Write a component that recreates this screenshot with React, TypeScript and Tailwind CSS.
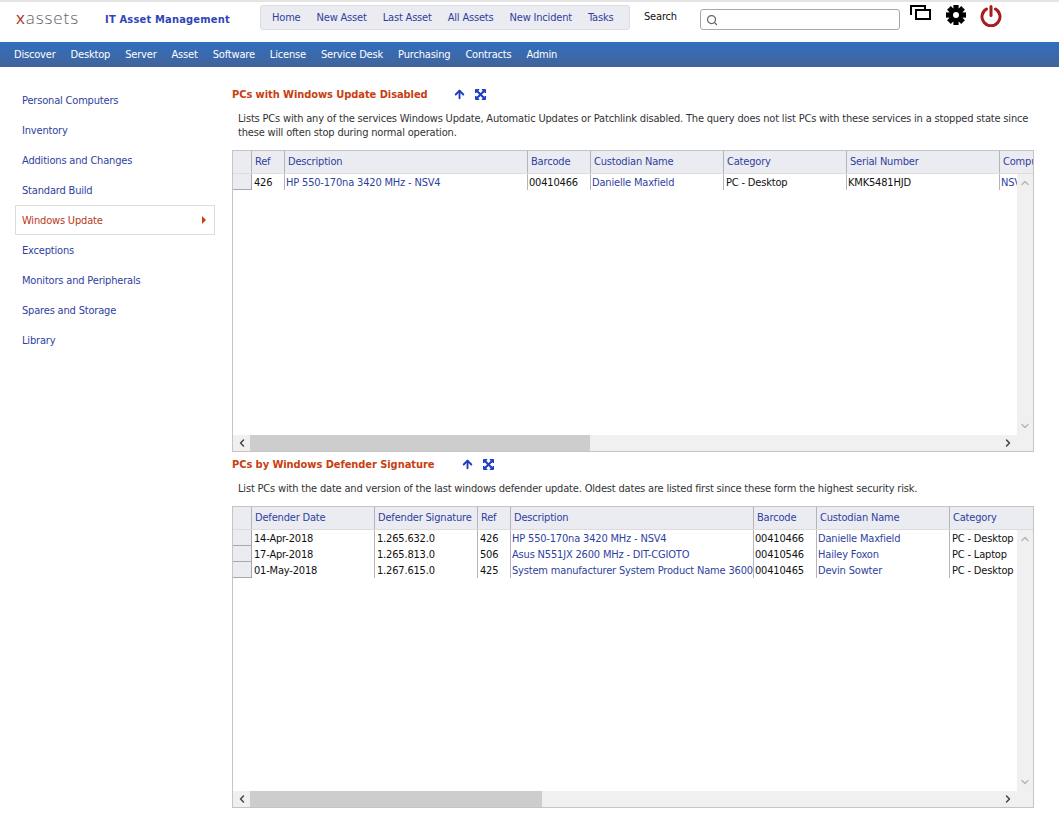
import { ArrowUp, ChevronDown, ChevronLeft, ChevronRight, ChevronUp, Search } from "lucide-react";

const FONT = "font-['DejaVu_Sans_Condensed','DejaVu_Sans',sans-serif]";
const LINK = "text-[#2f3f9f]";

const TOP_LINKS = ["Home", "New Asset", "Last Asset", "All Assets", "New Incident", "Tasks"];
const NAV = ["Discover", "Desktop", "Server", "Asset", "Software", "License", "Service Desk", "Purchasing", "Contracts", "Admin"];
const SIDE = ["Personal Computers", "Inventory", "Additions and Changes", "Standard Build", "Windows Update", "Exceptions", "Monitors and Peripherals", "Spares and Storage", "Library"];

type Col = { name: string; w: number; link?: boolean; tight?: boolean };

const COLS_1: Col[] = [
  { name: "Ref", w: 33 },
  { name: "Description", w: 243, link: true },
  { name: "Barcode", w: 63, tight: true },
  { name: "Custodian Name", w: 133, link: true },
  { name: "Category", w: 123 },
  { name: "Serial Number", w: 153, tight: true },
  { name: "Computer Name", w: 120, link: true },
];
const ROWS_1 = [["426", "HP 550-170na 3420 MHz - NSV4", "00410466", "Danielle Maxfield", "PC - Desktop", "KMK5481HJD", "NSV4"]];

const COLS_2: Col[] = [
  { name: "Defender Date", w: 123 },
  { name: "Defender Signature", w: 103 },
  { name: "Ref", w: 33 },
  { name: "Description", w: 243, link: true },
  { name: "Barcode", w: 63, tight: true },
  { name: "Custodian Name", w: 133, link: true },
  { name: "Category", w: 123 },
];
const ROWS_2 = [
  ["14-Apr-2018", "1.265.632.0", "426", "HP 550-170na 3420 MHz - NSV4", "00410466", "Danielle Maxfield", "PC - Desktop"],
  ["17-Apr-2018", "1.265.813.0", "506", "Asus N551JX 2600 MHz - DIT-CGIOTO", "00410546", "Hailey Foxon", "PC - Laptop"],
  ["01-May-2018", "1.267.615.0", "425", "System manufacturer System Product Name 3600", "00410465", "Devin Sowter", "PC - Desktop"],
];

function WindowsIcon() {
  return (
    <svg width="22" height="16" viewBox="0 0 22 16" fill="none" stroke="#000" strokeWidth="2">
      <path d="M1 10V1h14v3" />
      <rect x="6" y="5" width="14" height="9" fill="#fff" />
    </svg>
  );
}

function GearIcon() {
  const teeth = [0, 45, 90, 135];
  return (
    <svg width="20" height="20" viewBox="0 0 20 20">
      {teeth.map((a) => (
        <rect key={a} x="7.4" y="0" width="5.2" height="20" fill="#000" transform={`rotate(${a} 10 10)`} />
      ))}
      <circle cx="10" cy="10" r="7" fill="#000" />
      <circle cx="10" cy="10" r="3" fill="#fff" />
    </svg>
  );
}

function PowerIcon() {
  return (
    <svg width="22" height="22" viewBox="0 0 22 22" fill="none" stroke="#a81c1c" strokeWidth="3" strokeLinecap="round">
      <path d="M6.5 4a9 9 0 1 0 9 0" />
      <path d="M11 1.5v9" />
    </svg>
  );
}

function ExpandIcon() {
  return (
    <svg width="11" height="11" viewBox="0 0 11 11" fill="#1f3fc0" stroke="#1f3fc0">
      <path d="M0.5 0.5h3.5l-3.5 3.5zM10.5 0.5v3.5l-3.5-3.5zM0.5 10.5v-3.5l3.5 3.5zM10.5 10.5h-3.5l3.5-3.5z" />
      <path d="M2 2l7 7M9 2l-7 7" strokeWidth="2" />
    </svg>
  );
}

function Grid({ cols, rows, thumb }: { cols: Col[]; rows: string[][]; thumb: number }) {
  return (
    <div className="flex h-[302px] w-[802px] flex-col border border-[#c4c4c4] bg-white">
      <div className="flex h-[23px] shrink-0 overflow-hidden border-b border-[#dcdcdc] bg-[#ebebf2]">
        <div className="h-full w-[19px] shrink-0 border-r border-[#b4b4bc]" />
        {cols.map((c) => (
          <div key={c.name} style={{ width: c.w }} className={`h-full shrink-0 overflow-hidden whitespace-nowrap border-r border-[#b4b4bc] pl-[3px] pt-[3px] ${LINK}`}>
            {c.name}
          </div>
        ))}
      </div>
      <div className="flex min-h-0 flex-1">
        <div className="min-w-0 flex-1 overflow-hidden">
          {rows.map((r) => (
            <div key={r[0]} className="flex h-[16px]">
              <div className="h-full w-[19px] shrink-0 border-b border-r border-[#a8a8a8] bg-[#ebebf2]" />
              {cols.map((c, i) => (
                <div key={c.name} style={{ width: c.w }} className={`flex h-full shrink-0 items-center overflow-hidden whitespace-nowrap border-r border-[#b4b4bc] ${c.link || c.tight ? "pl-[1px]" : "pl-[2px]"} ${c.link ? LINK : "text-[#111]"}`}>
                  {r[i]}
                </div>
              ))}
            </div>
          ))}
        </div>
        <div className="flex w-[16px] shrink-0 flex-col items-center justify-between bg-[#f0f0f0] py-[3px] text-[#b8b8b8]">
          <ChevronUp size={12} strokeWidth={3} />
          <ChevronDown size={12} strokeWidth={3} />
        </div>
      </div>
      <div className="flex h-[16px] shrink-0 items-center bg-[#f0f0f0]">
        <div className="flex w-[17px] shrink-0 justify-center text-[#444]">
          <ChevronLeft size={12} strokeWidth={3} />
        </div>
        <div style={{ width: thumb }} className="h-full shrink-0 bg-[#cdcdcd]" />
        <div className="flex-1" />
        <div className="mr-[17px] flex w-[16px] justify-center text-[#444]">
          <ChevronRight size={12} strokeWidth={3} />
        </div>
      </div>
    </div>
  );
}

function Heading({ title, iconsAt }: { title: string; iconsAt: number }) {
  return (
    <div className="flex h-[14px] items-center">
      <span style={{ width: iconsAt }} className="shrink-0 whitespace-nowrap text-[11px] font-bold tracking-[-0.06px] text-[#c8400f]">{title}</span>
      <span className="flex items-center gap-[9px]">
        <ArrowUp size={13} strokeWidth={3.5} className="text-[#1f3fc0]" />
        <ExpandIcon />
      </span>
    </div>
  );
}

export default function App() {
  return (
    <div className={`${FONT} h-[828px] w-[1059px] overflow-hidden bg-white text-[11px] leading-[15px] tracking-[-0.18px]`}>
      <div className="h-[2px] bg-[#e4e4e4]" />
      {/* Top bar */}
      <div className="flex h-[40px] items-start bg-white">
        <div className="ml-[16px] mt-[4px] w-[89px] font-['Open_Sans',sans-serif] text-[17px] font-light leading-[24px] tracking-[0.9px] text-[#66666e]">
          <span className="font-normal text-[#b0301c]">x</span>assets
        </div>
        <div className="mt-[10px] w-[155px] whitespace-nowrap text-[11px] font-bold leading-[15px] tracking-[0.2px] text-[#2f45b5]">IT Asset Management</div>
        <div className="mt-[3px] flex h-[25px] w-[370px] items-center gap-[16px] rounded-[3px] border border-[#dcdce4] bg-[#ebebf2] pl-[11px]">
          {TOP_LINKS.map((l) => (
            <span key={l} className={`whitespace-nowrap ${LINK}`}>{l}</span>
          ))}
        </div>
        <div className="ml-[14px] mt-[7px] w-[56px] text-[#111]">Search</div>
        <div className="mt-[7px] flex h-[21px] w-[200px] items-center rounded-[3px] border border-[#a8a8a8] pl-[5px]">
          <Search size={12} strokeWidth={2.5} className="text-[#666]" />
        </div>
        <div className="ml-[10px] mt-[3px]"><WindowsIcon /></div>
        <div className="ml-[14px] mt-[3px]"><GearIcon /></div>
        <div className="ml-[14px] mt-[3px]"><PowerIcon /></div>
      </div>
      {/* Blue nav */}
      <div className="flex h-[25px] items-center gap-[15px] bg-gradient-to-b from-[#2f70c0] to-[#41639a] pb-[1px] pl-[14px] text-white">
        {NAV.map((n) => (
          <span key={n} className="whitespace-nowrap">{n}</span>
        ))}
      </div>
      <div className="flex">
        {/* Sidebar */}
        <div className="w-[232px] shrink-0 pl-[15px] pt-[18px]">
          {SIDE.map((s) =>
            s === "Windows Update" ? (
              <div key={s} className="flex h-[30px] w-[200px] items-center justify-between border border-[#dcdcdc] pl-[6px] pr-[8px] text-[#b8391a]">
                {s}
                <span className="h-0 w-0 border-y-[4px] border-l-[4px] border-y-transparent border-l-[#c8400f]" />
              </div>
            ) : (
              <div key={s} className={`flex h-[30px] items-center pl-[7px] ${LINK}`}>{s}</div>
            ),
          )}
        </div>
        {/* Content */}
        <div className="min-w-0 flex-1 pt-[20px]">
          <Heading title="PCs with Windows Update Disabled" iconsAt={221} />
          <p className="mb-[10px] ml-[6px] mt-[11px] h-[28px] w-[796px] leading-[14px] text-[#333]">
            Lists PCs with any of the services Windows Update, Automatic Updates or Patchlink disabled. The query does not list PCs with these services in a stopped state since these will often stop during normal operation.
          </p>
          <Grid cols={COLS_1} rows={ROWS_1} thumb={340} />
          <div className="mt-[5px]">
            <Heading title="PCs by Windows Defender Signature" iconsAt={229} />
          </div>
          <p className="mb-[10px] ml-[6px] mt-[10px] h-[15px] whitespace-nowrap text-[#333]">
            List PCs with the date and version of the last windows defender update. Oldest dates are listed first since these form the highest security risk.
          </p>
          <Grid cols={COLS_2} rows={ROWS_2} thumb={292} />
        </div>
      </div>
    </div>
  );
}
